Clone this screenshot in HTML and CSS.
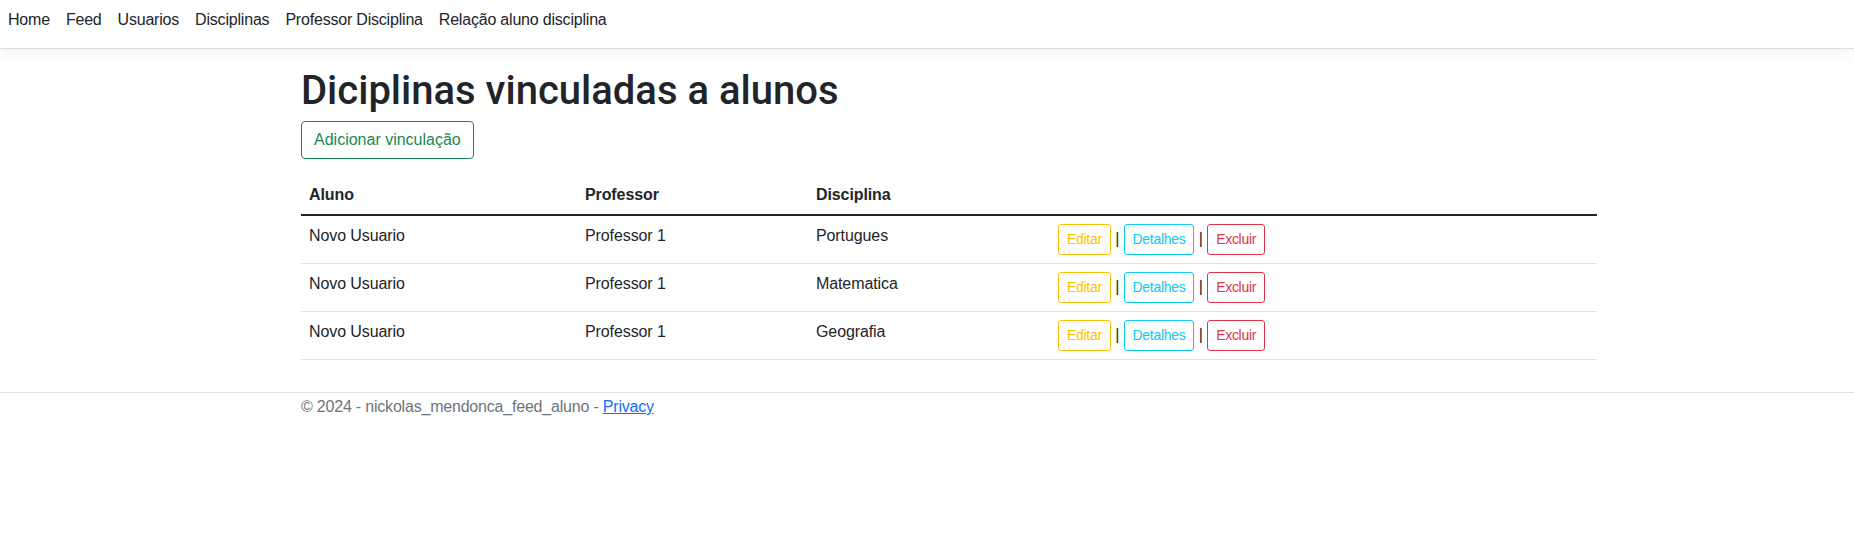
FILE: index.html
```html
<!DOCTYPE html>
<html lang="pt-BR">
<head>
<meta charset="utf-8">
<title>Diciplinas vinculadas a alunos</title>
<link rel="stylesheet" href="styles.css">
</head>
<body>
<header class="navbar">
  <ul class="nav">
    <li><a class="nav-link" href="#">Home</a></li>
    <li><a class="nav-link" href="#">Feed</a></li>
    <li><a class="nav-link" href="#">Usuarios</a></li>
    <li><a class="nav-link" href="#">Disciplinas</a></li>
    <li><a class="nav-link" href="#">Professor Disciplina</a></li>
    <li><a class="nav-link" href="#">Relação aluno disciplina</a></li>
  </ul>
</header>
<main class="container main">
  <h1>Diciplinas vinculadas a alunos</h1>
  <p class="actions-top"><a class="btn btn-outline-success" href="#">Adicionar vinculação</a></p>
  <table class="table">
    <thead>
      <tr>
        <th class="col-aluno">Aluno</th>
        <th class="col-prof">Professor</th>
        <th class="col-disc">Disciplina</th>
        <th></th>
      </tr>
    </thead>
    <tbody>
      <tr>
        <td>Novo Usuario</td>
        <td>Professor 1</td>
        <td>Portugues</td>
        <td><a class="btn-sm btn-outline-warning" href="#">Editar</a> | <a class="btn-sm btn-outline-info" href="#">Detalhes</a> | <a class="btn-sm btn-outline-danger" href="#">Excluir</a></td>
      </tr>
      <tr>
        <td>Novo Usuario</td>
        <td>Professor 1</td>
        <td>Matematica</td>
        <td><a class="btn-sm btn-outline-warning" href="#">Editar</a> | <a class="btn-sm btn-outline-info" href="#">Detalhes</a> | <a class="btn-sm btn-outline-danger" href="#">Excluir</a></td>
      </tr>
      <tr>
        <td>Novo Usuario</td>
        <td>Professor 1</td>
        <td>Geografia</td>
        <td><a class="btn-sm btn-outline-warning" href="#">Editar</a> | <a class="btn-sm btn-outline-info" href="#">Detalhes</a> | <a class="btn-sm btn-outline-danger" href="#">Excluir</a></td>
      </tr>
    </tbody>
  </table>
</main>
<footer class="footer">
  <div class="container footer-inner">&copy; 2024 - nickolas_mendonca_feed_aluno - <a class="footer-link" href="#">Privacy</a></div>
</footer>
</body>
</html>
```

FILE: styles.css
```css
* {
  box-sizing: border-box;
}

html, body {
  margin: 0;
  padding: 0;
  background: #fff;
}

body {
  font-family: "Liberation Sans", Arial, sans-serif;
  font-size: 16px;
  line-height: 1.5;
  color: #212529;
}

.navbar {
  padding: 0 0 8px 0;
  border-bottom: 1px solid #dee2e6;
  box-shadow: 0 4px 12px rgba(0, 0, 0, 0.05);
  background: #fff;
}

.nav {
  list-style: none;
  margin: 0;
  padding: 0;
  display: flex;
}

.nav-link {
  display: block;
  padding: 8px;
  color: #212529;
  text-decoration: none;
  letter-spacing: -0.2px;
}

.container {
  max-width: 1320px;
  padding: 0 12px;
  margin-left: calc(50% - 638px);
}

.main {
  padding-top: 16px;
  padding-bottom: 16px;
}

h1 {
  font-family: Roboto, "Liberation Sans", Arial, sans-serif;
  font-size: 40px;
  font-weight: 500;
  line-height: 1.2;
  margin: 2px 0 6px 0;
}

.actions-top {
  margin: 0 0 16px 0;
}

.btn {
  display: inline-block;
  padding: 6px 12px;
  font-size: 16px;
  line-height: 24px;
  border: 1px solid transparent;
  border-radius: 4px;
  text-decoration: none;
}

.btn-sm {
  display: inline-block;
  padding: 4px 8px;
  font-size: 14px;
  line-height: 21px;
  border: 1px solid transparent;
  border-radius: 3px;
  text-decoration: none;
  letter-spacing: -0.3px;
}

.btn-outline-success {
  color: #198754;
  border-color: #198754;
}

.btn-outline-warning {
  color: #ffc107;
  border-color: #ffc107;
}

.btn-outline-info {
  color: #0dcaf0;
  border-color: #0dcaf0;
}

.btn-outline-danger {
  color: #dc3545;
  border-color: #dc3545;
}

.table {
  width: 100%;
  border-collapse: separate;
  border-spacing: 0;
  table-layout: fixed;
  margin-bottom: 16px;
}

.table th,
.table td {
  padding: 8px;
  text-align: left;
  vertical-align: top;
  border-bottom: 1px solid #dee2e6;
  letter-spacing: -0.1px;
}

.table th {
  font-weight: 700;
  padding-bottom: 7px;
  border-bottom: 2px solid #212529;
}

.col-aluno {
  width: 276px;
}

.col-prof {
  width: 231px;
}

.col-disc {
  width: 242px;
}

.footer {
  border-top: 1px solid #dee2e6;
  color: #6c757d;
}

.footer-inner {
  line-height: 28px;
  white-space: nowrap;
  letter-spacing: -0.2px;
}

.footer-link {
  color: #0d6efd;
  text-decoration: underline;
}
```
